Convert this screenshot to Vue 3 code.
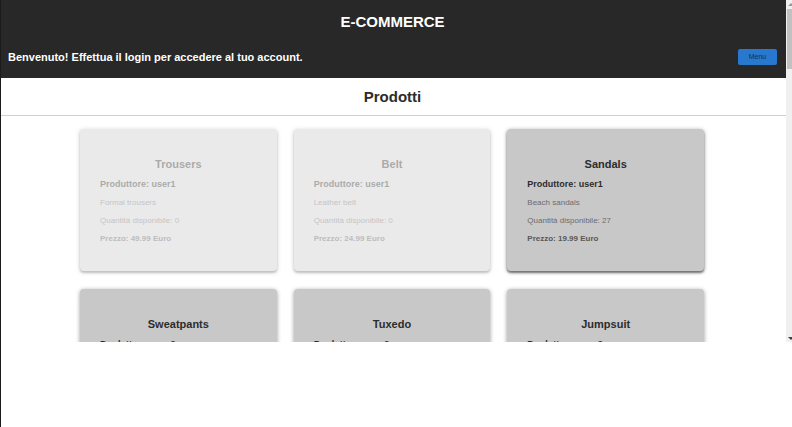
<script setup>
const products = [
  { name: 'Trousers', maker: 'user1', description: 'Formal trousers', quantity: 0, price: '49.99' },
  { name: 'Belt', maker: 'user1', description: 'Leather belt', quantity: 0, price: '24.99' },
  { name: 'Sandals', maker: 'user1', description: 'Beach sandals', quantity: 27, price: '19.99', active: true },
  { name: 'Sweatpants', maker: 'user2' },
  { name: 'Tuxedo', maker: 'user2' },
  { name: 'Jumpsuit', maker: 'user2' },
]
</script>

<template>
  <div class="page">
    <div class="viewport">
      <div class="content">
        <header class="header">
          <h1>E-COMMERCE</h1>
          <div class="header-row">
            <p class="welcome">Benvenuto! Effettua il login per accedere al tuo account.</p>
            <button type="button" class="menu">Menu</button>
          </div>
        </header>
        <h2 class="section-title">Prodotti</h2>
        <main class="grid">
          <article
            v-for="p in products"
            :key="p.name"
            class="card"
            :class="{ soldout: p.quantity === 0, active: p.active }"
          >
            <h3>{{ p.name }}</h3>
            <h4>Produttore: {{ p.maker }}</h4>
            <template v-if="p.description">
              <p>{{ p.description }}</p>
              <p>Quantità disponibile: {{ p.quantity }}</p>
              <p class="price">Prezzo: {{ p.price }} Euro</p>
            </template>
          </article>
        </main>
      </div>
      <div class="scrollbar" aria-hidden="true">
        <svg class="arrow" viewBox="0 0 10 9"><path d="M2 6 L5 3 L8 6 Z" fill="#9a9a9a" /></svg>
        <div class="track"><div class="thumb"></div></div>
        <svg class="arrow" viewBox="0 0 10 9"><path d="M2 4 H8 L5 7 Z" fill="#404040" /></svg>
      </div>
    </div>
  </div>
</template>

<style>
body {
  margin: 0;
  background: #fff;
}
</style>

<style scoped>
.page {
  box-sizing: border-box;
  min-height: 100vh;
  border-left: 1px solid #1b1b1b;
  font-family: "Liberation Sans", Arial, sans-serif;
  color: #2c2c2c;
}
.viewport {
  display: flex;
  height: 80vh;
  overflow: hidden;
}
.content {
  flex: 1;
  min-width: 0;
}
h1,
h2,
h3,
h4,
p {
  margin: 0;
}
.header {
  background: #282828;
  color: #fff;
  padding: 13px 9px 13px 7px;
}
h1 {
  font-size: 15px;
  line-height: 18px;
  text-align: center;
}
.header-row {
  display: flex;
  align-items: center;
  justify-content: space-between;
  margin-top: 18px;
}
.welcome {
  font-size: 11px;
  line-height: 16px;
  font-weight: bold;
}
.menu {
  width: 39px;
  height: 16px;
  padding: 0;
  border: 0;
  border-radius: 2px;
  background: #2878d0;
  color: #14304f;
  font-family: inherit;
  font-size: 7px;
  line-height: 16px;
}
.section-title {
  padding: 10px 9px 9px 7px;
  border-bottom: 1px solid #d0d0d0;
  font-size: 15px;
  line-height: 18px;
  text-align: center;
}
.grid {
  display: grid;
  grid-template-columns: repeat(3, 1fr);
  gap: 18px 17px;
  padding: 13px 82px 20px 79px;
}
.card {
  padding: 27px 20px 23px;
  border-radius: 4px;
  background: #c8c8c8;
  box-shadow: 0 1px 4px rgba(0, 0, 0, 0.4);
}
.card.active {
  box-shadow: 0 1px 4px rgba(0, 0, 0, 0.4), 0 2px 2px rgba(0, 0, 0, 0.4);
}
.card.soldout {
  opacity: 0.4;
  background: #cbcbcb;
  box-shadow: 0 1px 4px rgba(0, 0, 0, 0.5), 0 2px 2px rgba(0, 0, 0, 0.4);
}
h3 {
  margin-bottom: 6px;
  font-size: 11px;
  line-height: 16px;
  text-align: center;
}
h4 {
  margin-bottom: 4px;
  font-size: 9px;
  line-height: 12px;
}
.card p {
  font-size: 8px;
  line-height: 18px;
  color: #6c6c70;
}
.card .price {
  font-weight: bold;
  color: #585858;
}
.scrollbar {
  display: flex;
  flex-direction: column;
  width: 6px;
  overflow: hidden;
  background: #f0f0f0;
}
.arrow {
  flex: none;
  width: 10px;
  height: 9px;
}
.track {
  flex: 1;
}
.thumb {
  width: 5px;
  height: 60px;
  margin-left: 1px;
  background: #c1c1c1;
}
</style>
